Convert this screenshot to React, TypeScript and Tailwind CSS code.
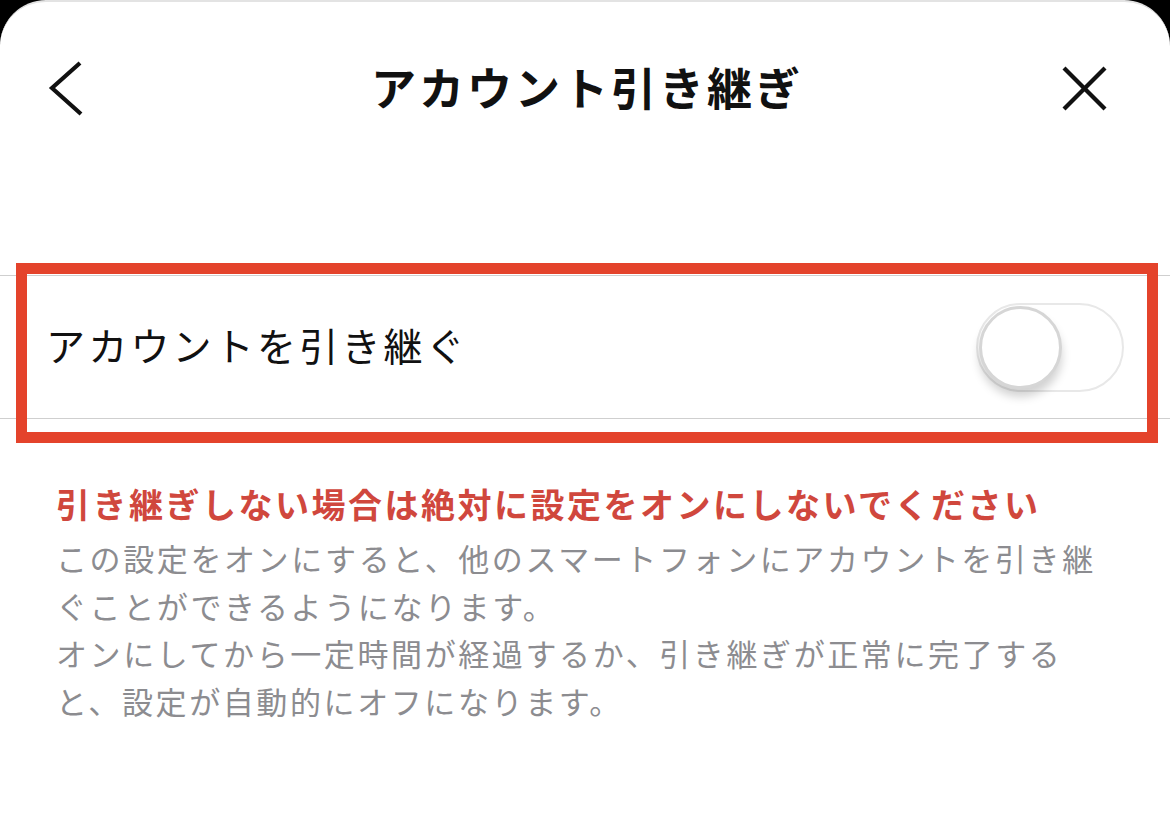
import React, { useState } from 'react';

const font = { fontFamily: '"Noto Sans CJK JP", "Noto Sans", sans-serif' };

const BackIcon = () => (
  <svg width="40" height="60" viewBox="0 0 40 60" fill="none">
    <polyline points="32,4 4,29 33,55" stroke="#111" strokeWidth="4.2" strokeLinecap="butt" strokeLinejoin="miter" />
  </svg>
);

const CloseIcon = () => (
  <svg width="48" height="48" viewBox="0 0 48 48" fill="none">
    <line x1="3" y1="3" x2="44" y2="44" stroke="#111" strokeWidth="4.2" />
    <line x1="44" y1="3" x2="3" y2="44" stroke="#111" strokeWidth="4.2" />
  </svg>
);

const Toggle = ({ on, onChange }: { on: boolean; onChange: () => void }) => (
  <button
    onClick={onChange}
    className={`relative w-[148px] h-[89px] rounded-full border-2 border-[#e8e8e8] ${on ? 'bg-[#4cd964]' : 'bg-white'}`}
  >
    <span
      className={`absolute top-[1px] ${on ? 'right-[1px]' : 'left-[1px]'} w-[83px] h-[83px] rounded-full bg-white border-[3px] border-[#d6d6d6] shadow-[0_8px_10px_rgba(0,0,0,0.18)]`}
    />
  </button>
);

export default function App() {
  const [on, setOn] = useState(false);

  return (
    <div className="relative w-[1170px] h-[826px] bg-black overflow-hidden" style={font}>
      <div className="h-full bg-white rounded-t-[46px] border-t-2 border-[#e3e3e3]">
        {/* Header */}
        <div className="mt-[57px] h-[60px] grid grid-cols-[1fr_auto_1fr] items-center px-[48px]">
          <div className="flex items-center">
            <BackIcon />
          </div>
          <h1 className="pb-[5px] pl-[4px] text-[45px] font-bold tracking-[3px] text-[#111] leading-none">アカウント引き継ぎ</h1>
          <div className="flex items-center justify-end pr-[13px]">
            <CloseIcon />
          </div>
        </div>

        {/* Setting row */}
        <div className="mt-[156px] h-[144px] border-y border-[#cfcfcf] flex items-center justify-between pl-[46px] pr-[46px]">
          <span className="pb-[6px] text-[39px] tracking-[3.2px] text-[#111] leading-none">アカウントを引き継ぐ</span>
          <Toggle on={on} onChange={() => setOn(!on)} />
        </div>

        {/* Notes */}
        <div className="pl-[56px] pr-[40px]">
          <p className="mt-[61px] text-[34px] font-bold tracking-[2.5px] leading-[48px] text-[#d0473d]">
            引き継ぎしない場合は絶対に設定をオンにしないでください
          </p>
          <p className="mt-[6px] text-[31px] tracking-[2.6px] leading-[47.7px] text-[#8c8c90]">
            この設定をオンにすると、他のスマートフォンにアカウントを引き継
            <br />
            ぐことができるようになります。
            <br />
            オンにしてから一定時間が経過するか、引き継ぎが正常に完了する
            <br />
            と、設定が自動的にオフになります。
          </p>
        </div>
      </div>

      {/* Highlight annotation */}
      <div className="pointer-events-none absolute left-[16px] top-[263px] w-[1142px] h-[180px] border-[11px] border-[#e4432b]" />
    </div>
  );
}
